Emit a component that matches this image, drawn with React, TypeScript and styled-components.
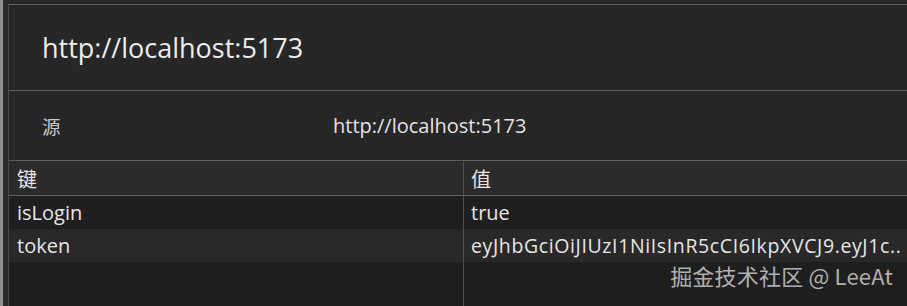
import React from 'react';
import styled, { createGlobalStyle } from 'styled-components';

const Global = createGlobalStyle`
  html, body {
    margin: 0;
    padding: 0;
    background: #272727;
  }
  body {
    font-family: "Open Sans", "Noto Sans", "Noto Sans CJK SC", sans-serif;
    color: #e3e3e3;
  }
`;

const Frame = styled.div`
  display: flex;
  width: 907px;
  height: 306px;
  overflow: hidden;
  position: relative;
  background: #272727;
`;

const Strip = styled.div`
  width: 3px;
  background: #8f8f8f;
  flex-shrink: 0;
`;

const Gutter = styled.div`
  width: 5px;
  background: #2a2a2a;
  flex-shrink: 0;
`;

const Main = styled.div`
  flex: 1;
  display: flex;
  flex-direction: column;
  margin-top: 4px;
  border-top: 1px solid #5e5e5e;
  border-left: 1px solid #4a4a4a;
  background: #272727;
`;

const TitleBar = styled.div`
  height: 86px;
  display: flex;
  align-items: center;
  padding-left: 33px;
  border-bottom: 1px solid #5e5e5e;
  font-size: 27px;
  color: #ececec;
  box-sizing: border-box;
`;

const OriginRow = styled.div`
  height: 69px;
  display: grid;
  grid-template-columns: 291px 1fr;
  align-items: center;
  padding-left: 33px;
  font-size: 20px;
`;

const OriginLabel = styled.span`
  color: #c9c9c9;
  font-size: 18.5px;
`;

const Table = styled.div`
  flex: 1;
  display: grid;
  grid-template-columns: 454px 1fr;
  grid-template-rows: 35px 33px 33px 1fr;
  border-top: 1px solid #5e5e5e;
  font-size: 20px;
`;

const Cell = styled.div<{ $tone: 'head' | 'odd' | 'even' | 'empty'; $right?: boolean }>`
  display: flex;
  align-items: center;
  padding-left: ${(p) => (p.$right ? '7px' : '8px')};
  min-width: 0;
  white-space: nowrap;
  overflow: hidden;
  border-left: ${(p) => (p.$right ? '1px solid #4f4f4f' : 'none')};
  border-bottom: ${(p) => (p.$tone === 'head' ? '1px solid #5e5e5e' : 'none')};
  background: ${(p) =>
    p.$tone === 'head' ? '#2b2b2b' : p.$tone === 'odd' ? '#1f1f1f' : p.$tone === 'even' ? '#292929' : '#1f1f1f'};
  color: #e6e6e6;
`;

const Token = styled.span`
  font-size: 19.5px;
  letter-spacing: 0.62px;
`;

const Watermark = styled.div`
  position: absolute;
  right: 14px;
  bottom: 15px;
  font-size: 22px;
  color: rgba(225, 225, 225, 0.75);
  font-family: "Noto Sans CJK SC", "Open Sans", sans-serif;
  letter-spacing: 0.2px;
`;

const rows: { k: string; v: string; tone: 'odd' | 'even'; token?: boolean }[] = [
  { k: 'isLogin', v: 'true', tone: 'odd' },
  { k: 'token', v: 'eyJhbGciOiJIUzI1NiIsInR5cCI6IkpXVCJ9.eyJ1c..', tone: 'even', token: true },
];

const App = () => (
  <>
    <Global />
    <Frame>
      <Strip />
      <Gutter />
      <Main>
        <TitleBar>http://localhost:5173</TitleBar>
        <OriginRow>
          <OriginLabel>源</OriginLabel>
          <span>http://localhost:5173</span>
        </OriginRow>
        <Table>
          <Cell $tone="head">键</Cell>
          <Cell $tone="head" $right>
            值
          </Cell>
          {rows.map((r) => (
            <React.Fragment key={r.k}>
              <Cell $tone={r.tone}>{r.k}</Cell>
              <Cell $tone={r.tone} $right>
                {r.token ? <Token>{r.v}</Token> : r.v}
              </Cell>
            </React.Fragment>
          ))}
          <Cell $tone="empty" />
          <Cell $tone="empty" $right />
        </Table>
      </Main>
      <Watermark>掘金技术社区 @ LeeAt</Watermark>
    </Frame>
  </>
);

export default App;
